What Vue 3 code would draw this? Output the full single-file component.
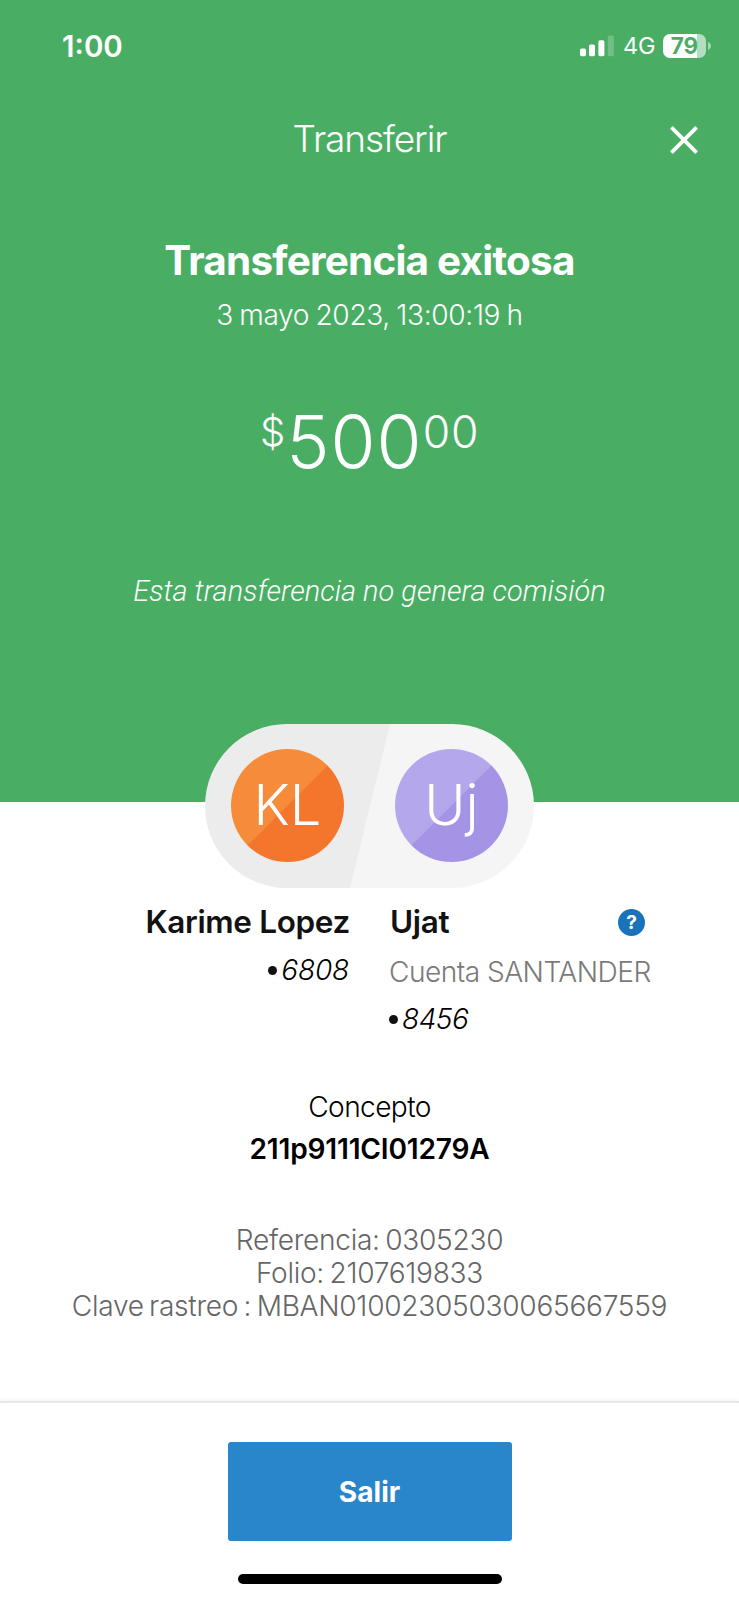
<script setup>
const details = [
  'Referencia: 0305230',
  'Folio: 2107619833',
  'Clave rastreo : MBAN01002305030065667559',
]
</script>

<template>
  <main class="screen">
    <section class="hero">
      <div class="status">
        <span class="time">1:00</span>
        <div class="indicators">
          <svg class="signal" width="34" height="22" viewBox="0 0 34 22">
            <rect x="0" y="13.6" width="6" height="7.6" rx="1.6" fill="#fff" />
            <rect x="9" y="9.6" width="6" height="11.6" rx="1.6" fill="#fff" />
            <rect x="18.4" y="5.2" width="6" height="16" rx="1.6" fill="#fff" />
            <rect x="27.8" y="0.4" width="6" height="20.8" rx="1.6" fill="#fff" fill-opacity=".22" />
          </svg>
          <span class="network">4G</span>
          <div class="battery"><span>79</span></div>
          <svg class="tip" width="3" height="8" viewBox="0 0 3 8"><path d="M0 0C4 1.6 4 6.4 0 8Z" fill="#fff" fill-opacity=".5" /></svg>
        </div>
      </div>

      <header class="bar">
        <h1>Transferir</h1>
        <button class="close" aria-label="Cerrar">
          <svg width="28" height="28" viewBox="0 0 28 28">
            <path d="M1.4 1.4L26.6 26.6M26.6 1.4L1.4 26.6" stroke="#fff" stroke-width="3.8" />
          </svg>
        </button>
      </header>

      <h2>Transferencia exitosa</h2>
      <p class="date">3 mayo 2023, 13:00:19 h</p>
      <div class="amount">
        <span class="currency">$</span><span class="units">500</span><span class="cents">00</span>
      </div>
      <p class="fee">Esta transferencia no genera comisión</p>
    </section>

    <div class="pill">
      <div class="avatar orange">KL</div>
      <div class="avatar violet">Uj</div>
    </div>

    <section class="people">
      <div class="from">
        <h3>Karime Lopez</h3>
        <p class="account"><i class="dot"></i><span>6808</span></p>
      </div>
      <div class="to">
        <div class="name-row">
          <h3>Ujat</h3>
          <span class="help">?</span>
        </div>
        <p class="bank">Cuenta SANTANDER</p>
        <p class="account"><i class="dot"></i><span>8456</span></p>
      </div>
    </section>

    <section class="concept">
      <p class="label">Concepto</p>
      <p class="value">211p9111CI01279A</p>
    </section>

    <section class="details">
      <p v-for="line in details" :key="line">{{ line }}</p>
    </section>

    <footer class="footer">
      <button class="exit">Salir</button>
      <div class="home"></div>
    </footer>
  </main>
</template>

<style>
body {
  margin: 0;
  background: #fff;
}
</style>

<style scoped>
.screen {
  width: 739px;
  height: 1600px;
  display: flex;
  flex-direction: column;
  overflow: hidden;
  background: #fff;
  font-family: Inter, "Liberation Sans", sans-serif;
  font-weight: 300;
  color: #121212;
}
h1, h2, h3, p {
  margin: 0;
  font-weight: inherit;
  white-space: nowrap;
}
button {
  border: 0;
  padding: 0;
  font-family: inherit;
}
.hero {
  flex: none;
  height: 802px;
  background: #49ae64;
  color: #fff;
  text-align: center;
}
.status {
  height: 91px;
  padding: 0 28px 0 62px;
  display: flex;
  align-items: center;
  justify-content: space-between;
}
.time {
  font-size: 29.5px;
  font-weight: 600;
  line-height: 36px;
}
.indicators {
  display: flex;
  align-items: center;
}
.signal {
  margin-right: 9px;
}
.network {
  width: 40px;
  margin-top: 1px;
  text-align: left;
  font-size: 23.5px;
  font-weight: 400;
  line-height: 24px;
  letter-spacing: -0.3px;
}
.battery {
  width: 43px;
  height: 24px;
  margin-right: 2px;
  border-radius: 7px;
  background: linear-gradient(90deg, #fff 34px, #b5dec0 34px);
  color: #49ae64;
  font-size: 22.5px;
  font-weight: 700;
  line-height: 24px;
  text-align: center;
}
.bar {
  height: 94px;
  display: grid;
  grid-template-columns: 1fr auto 1fr;
  align-items: center;
}
.bar h1 {
  grid-column: 2;
  margin-top: 1px;
  font-size: 37px;
  font-weight: 300;
  letter-spacing: -1.1px;
}
.close {
  width: 28px;
  height: 28px;
  margin-top: 4px;
  margin-right: 41px;
  justify-self: end;
  background: none;
}
.close svg {
  display: block;
}
.hero h2 {
  margin-top: 51px;
  font-size: 40.4px;
  font-weight: 700;
  line-height: 50px;
  letter-spacing: -0.76px;
}
.date {
  margin-top: 9px;
  font-size: 28.1px;
  font-weight: 280;
  line-height: 40px;
  letter-spacing: -0.33px;
  word-spacing: -1.3px;
}
.amount {
  margin-top: 67px;
  height: 80px;
  display: flex;
  justify-content: center;
}
.currency {
  margin-right: 1px;
  font-size: 40px;
  font-weight: 280;
  line-height: 60px;
}
.units {
  font-size: 73px;
  font-weight: 300;
  line-height: 80px;
  letter-spacing: 1px;
}
.cents {
  font-size: 44.5px;
  font-weight: 300;
  line-height: 60px;
  letter-spacing: 0.7px;
}
.fee {
  margin-top: 89px;
  font-family: Roboto, "Liberation Sans", sans-serif;
  font-size: 28.9px;
  font-style: italic;
  line-height: 40px;
  letter-spacing: 0.05px;
}
.pill {
  flex: none;
  align-self: center;
  box-sizing: border-box;
  width: 329px;
  height: 164px;
  margin-top: -78px;
  padding: 0 26px;
  display: flex;
  align-items: center;
  justify-content: space-between;
  border-radius: 82px;
  background: linear-gradient(103.7deg, #ececec 50%, #f5f5f5 50.3%);
}
.avatar {
  width: 113px;
  height: 113px;
  margin-bottom: 1px;
  border-radius: 50%;
  color: #fff;
  font-size: 56px;
  font-weight: 300;
  line-height: 113px;
  text-align: center;
}
.orange {
  background: linear-gradient(135deg, #f68b3a 49.8%, #f3762c 50.2%);
}
.violet {
  background: linear-gradient(135deg, #b4a7ec 49.8%, #a594e6 50.2%);
}
.people {
  box-sizing: border-box;
  flex: none;
  height: 183px;
  padding-top: 14px;
  display: grid;
  grid-template-columns: 350px 1fr;
  column-gap: 39px;
}
.people h3 {
  font-size: 31.5px;
  font-weight: 600;
  line-height: 40px;
  letter-spacing: -0.35px;
}
.to h3 {
  margin-left: 1px;
}
.from {
  text-align: right;
}
.account {
  display: flex;
  align-items: center;
  font-size: 28.1px;
  font-style: italic;
  line-height: 40px;
  letter-spacing: -0.5px;
  color: #000;
}
.from .account {
  margin-top: 8px;
  margin-right: 1px;
  justify-content: flex-end;
  letter-spacing: -0.2px;
}
.dot {
  width: 9px;
  height: 9px;
  margin-right: 4px;
  border-radius: 50%;
  background: #111;
}
.name-row {
  display: flex;
  align-items: center;
  justify-content: space-between;
  padding-right: 94px;
}
.help {
  width: 27px;
  height: 27px;
  border-radius: 50%;
  background: #1973b8;
  color: #fff;
  font-size: 19px;
  font-weight: 700;
  line-height: 27px;
  text-align: center;
}
.bank {
  margin-top: 10px;
  font-size: 28.1px;
  line-height: 40px;
  letter-spacing: -0.53px;
  color: #7a7a7a;
}
.to .account {
  margin-top: 7px;
}
.concept {
  flex: none;
  margin-top: 16px;
  text-align: center;
  font-size: 28.1px;
  line-height: 40px;
  color: #000;
}
.label {
  letter-spacing: -0.6px;
}
.value {
  margin-top: 2px;
  font-weight: 600;
  letter-spacing: -0.2px;
}
.details {
  flex: none;
  height: 177px;
  margin-top: 55px;
  text-align: center;
  font-size: 28.1px;
  line-height: 33px;
  letter-spacing: -0.28px;
  word-spacing: -2.2px;
  color: #666;
}
.footer {
  flex: 1;
  display: flex;
  flex-direction: column;
  align-items: center;
  border-top: 2px solid #e7e7e7;
  box-shadow: 0 -1px 4px rgba(0, 0, 0, 0.06);
}
.exit {
  box-sizing: border-box;
  width: 284px;
  height: 99px;
  margin-top: 39px;
  padding-top: 1px;
  border-radius: 3px;
  background: #2a86ca;
  color: #fff;
  font-size: 28.1px;
  font-weight: 700;
  line-height: 98px;
}
.home {
  width: 264px;
  height: 10px;
  margin-top: 33px;
  border-radius: 5px;
  background: #000;
}
</style>
